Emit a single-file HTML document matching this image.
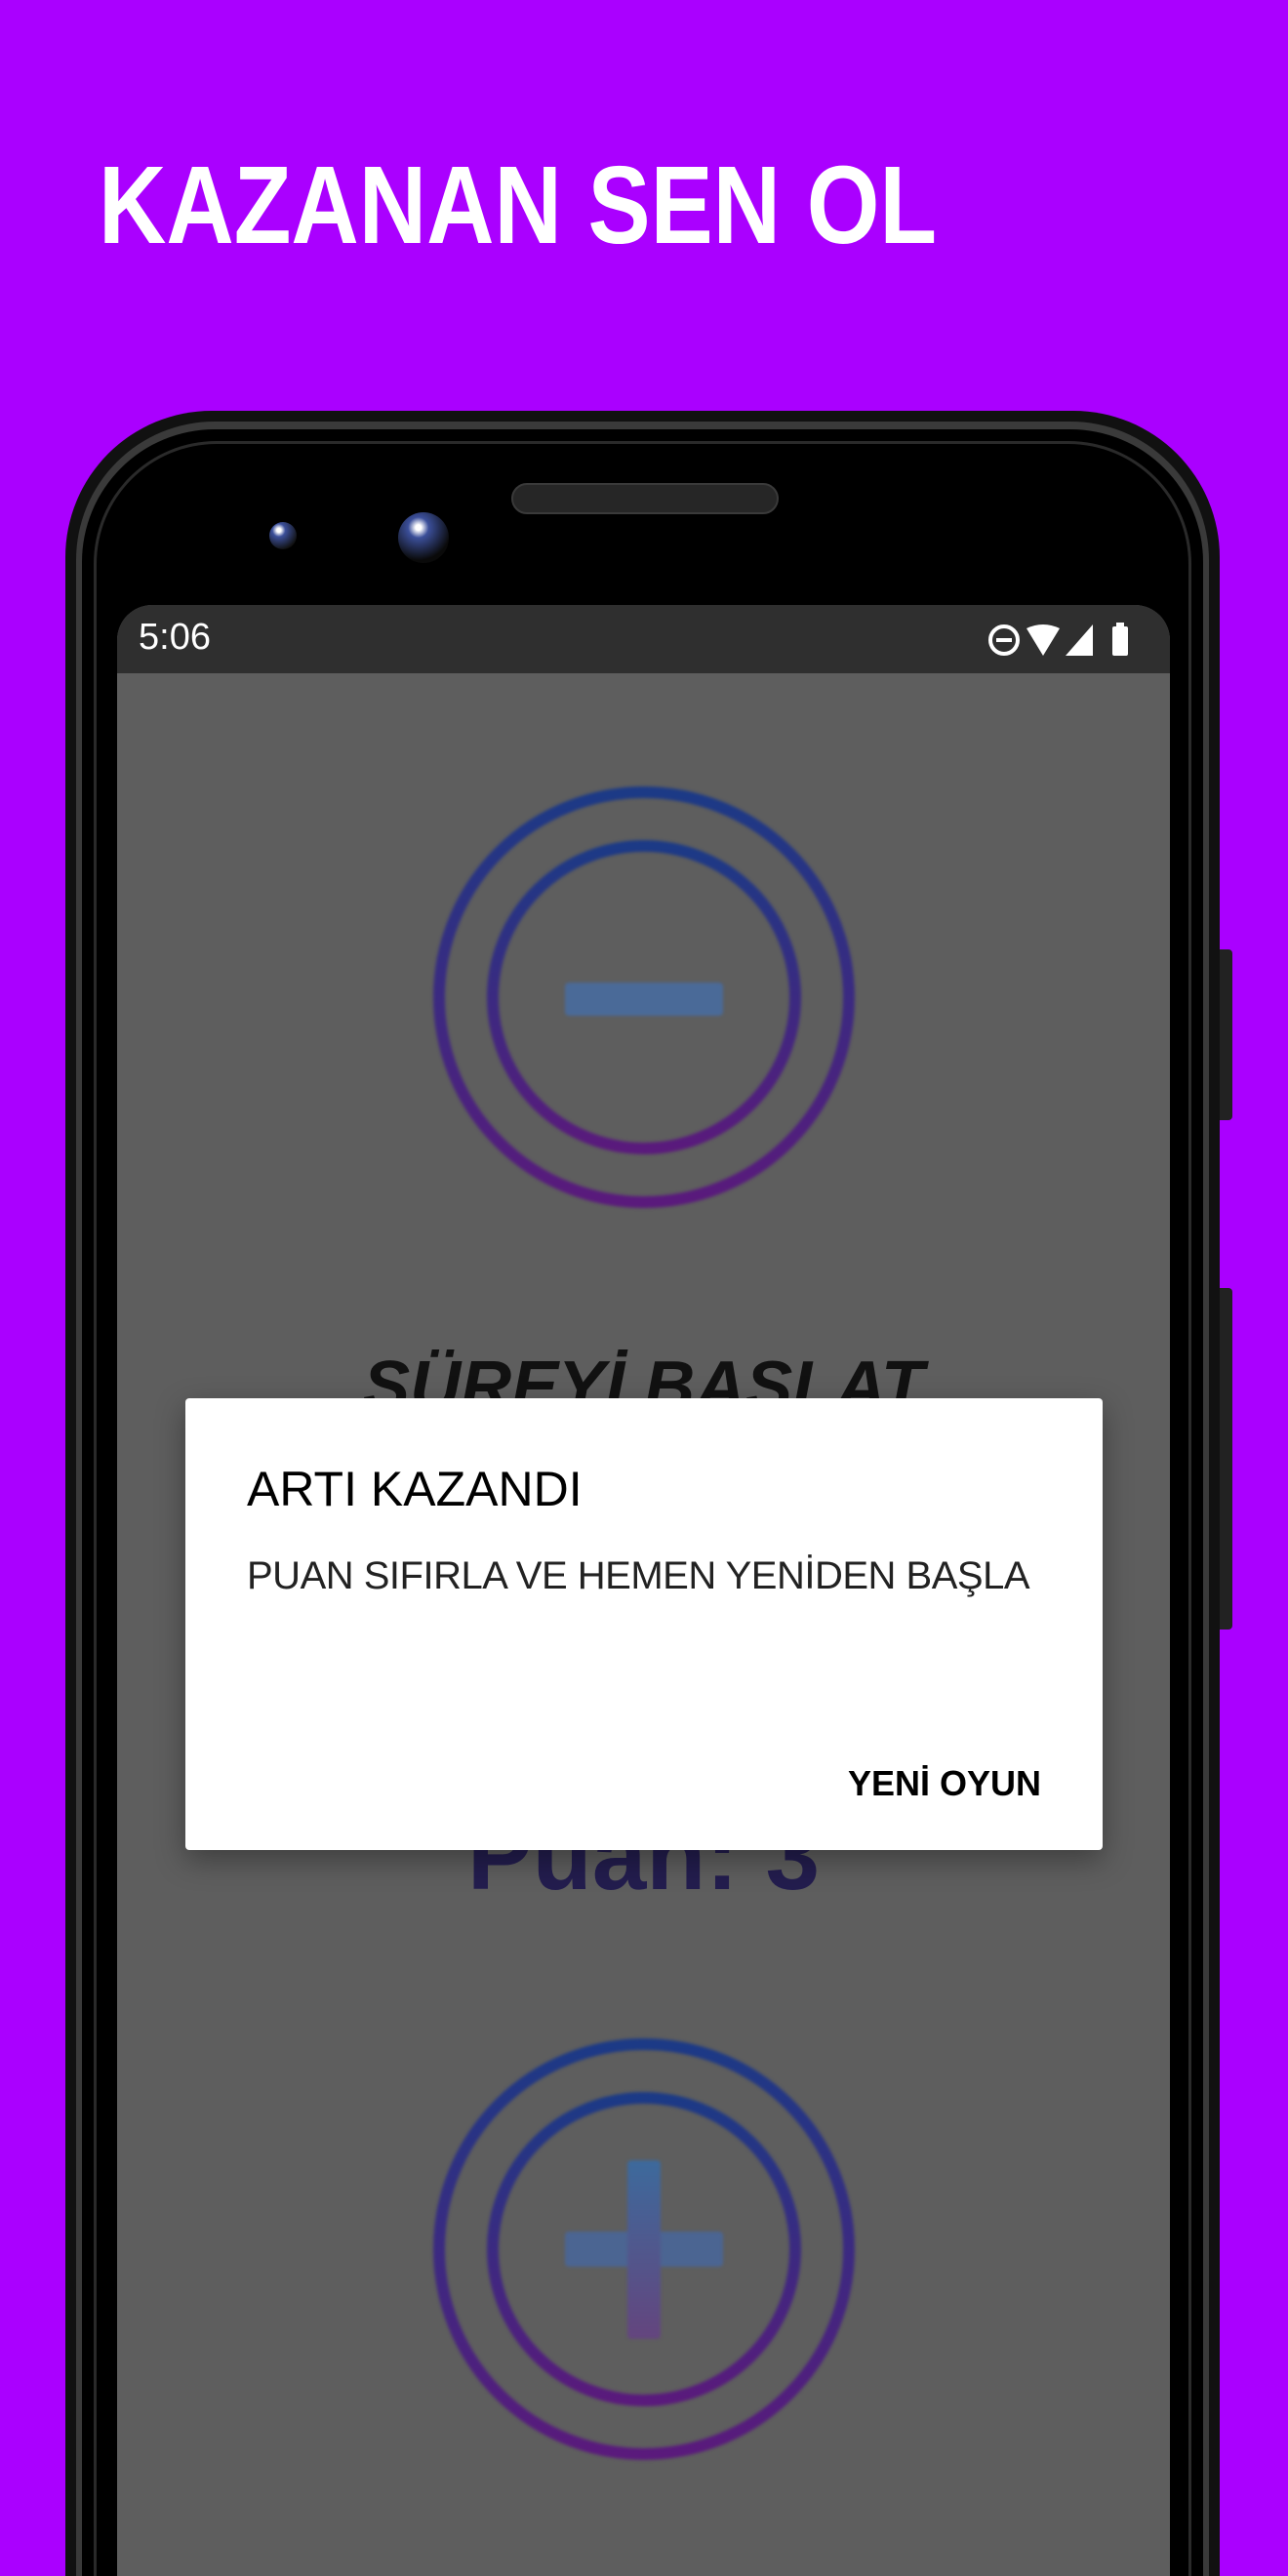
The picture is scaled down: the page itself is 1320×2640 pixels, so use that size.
<!DOCTYPE html>
<html style="margin:0;overflow:hidden;height:2640px"><head><meta charset="utf-8"><style>
body{margin:0;width:1320px;height:2640px;overflow:hidden;font-family:"Liberation Sans",sans-serif}
#w{position:relative;width:1320px;height:2640px;overflow:hidden;background:#aa00ff}
.abs{position:absolute}
</style></head><body><div id="w">
<div class="abs" style="left:101px;top:150px;font-size:113px;font-weight:bold;color:#fff;line-height:120px;transform:scaleX(0.85);transform-origin:0 0;white-space:nowrap">KAZANAN SEN OL</div>
<div class="abs" style="left:1246px;top:973px;width:17px;height:175px;background:#222;border-radius:4px"></div>
<div class="abs" style="left:1246px;top:1320px;width:17px;height:350px;background:#222;border-radius:4px"></div>
<div class="abs" style="left:67px;top:421px;width:1183px;height:2219px;background:#111;border-radius:150px 150px 0 0"></div>
<div class="abs" style="left:78px;top:432px;width:1161px;height:2208px;background:#3a3a3a;border-radius:142px 142px 0 0"></div>
<div class="abs" style="left:84px;top:440px;width:1149px;height:2200px;background:#000;border-radius:136px 136px 0 0"></div>
<div class="abs" style="left:96px;top:452px;width:1125px;height:2188px;border:3px solid #2a2a2a;border-bottom:0;border-radius:126px 126px 0 0;box-sizing:border-box"></div>
<div class="abs" style="left:524px;top:495px;width:274px;height:32px;background:#262626;border:2px solid #3a3a3a;border-radius:16px;box-sizing:border-box"></div>
<div class="abs" style="left:276px;top:535px;width:28px;height:28px;border-radius:50%;background:radial-gradient(circle at 35% 30%,#fff 0 8%,#3b4f9a 25%,#111 75%)"></div>
<div class="abs" style="left:408px;top:525px;width:52px;height:52px;border-radius:50%;background:radial-gradient(circle at 40% 30%,#fff 0 6%,#3b4f9a 22%,#0a0a0a 70%)"></div>
<div class="abs" style="left:120px;top:620px;width:1079px;height:2020px;background:#5e5e5e;border-radius:36px 36px 0 0;overflow:hidden">
  <div class="abs" style="left:0;top:0;width:1079px;height:70px;background:#2f2f2f;color:#fff;font-size:38px">
    <div class="abs" style="left:22px;top:12px">5:06</div>
    <svg class="abs" style="left:890px;top:14px" width="180" height="44" viewBox="0 0 180 44">
      <circle cx="19" cy="22" r="14" fill="none" stroke="#fff" stroke-width="4"/><rect x="11" y="20" width="16" height="4" fill="#fff"/>
      <path d="M42 10 Q59 2 76 10 L59 38 Z" fill="#fff"/>
      <path d="M110 6 L110 38 L82 38 Z" fill="#fff"/>
      <rect x="130" y="8" width="16" height="30" rx="2" fill="#fff"/><rect x="134" y="4" width="8" height="5" fill="#fff"/>
    </svg>
  </div>
  <svg class="abs" style="left:0;top:0;filter:blur(1.5px)" width="1079" height="2020">
    <defs><linearGradient id="g" x1="0" y1="0" x2="0" y2="1"><stop offset="0" stop-color="#1c3a86"/><stop offset="1" stop-color="#5a1a7c"/></linearGradient>
    <linearGradient id="b" x1="0" y1="0" x2="0" y2="1"><stop offset="0" stop-color="#3d6a9c"/><stop offset="1" stop-color="#64457e"/></linearGradient></defs>
    <g transform="translate(540,402)"><circle r="210" fill="none" stroke="url(#g)" stroke-width="12"/><circle r="155" fill="none" stroke="url(#g)" stroke-width="12"/>
      <rect x="-81" y="-15" width="162" height="34" rx="4" fill="#4a6a98"/></g>
    <g transform="translate(540,1685)"><circle r="210" fill="none" stroke="url(#g)" stroke-width="12"/><circle r="155" fill="none" stroke="url(#g)" stroke-width="12"/>
      <rect x="-81" y="-18" width="162" height="36" rx="4" fill="#4b6592"/><rect x="-17" y="-91" width="34" height="183" rx="4" fill="url(#b)"/></g>
  </svg>
  <div class="abs" style="left:0;width:1079px;top:760px;text-align:center;font-size:72px;font-weight:bold;font-style:italic;color:#111">SÜREYİ BAŞLAT</div>
  <div class="abs" style="left:0;width:1079px;top:1225px;text-align:center;font-size:100px;font-weight:bold;color:#231d4e">Puan: 3</div>
  <div class="abs" style="left:70px;top:813px;width:940px;height:463px;background:#fff;border-radius:4px;box-shadow:0 10px 30px rgba(0,0,0,.35)">
    <div class="abs" style="left:63px;top:64px;font-size:50px;color:#000">ARTI KAZANDI</div>
    <div class="abs" style="left:63px;top:160px;font-size:40px;color:#222;letter-spacing:-0.5px">PUAN SIFIRLA VE HEMEN YENİDEN BAŞLA</div>
    <div class="abs" style="right:63px;top:374px;font-size:36px;font-weight:bold;color:#000">YENİ OYUN</div>
  </div>
</div>
</div></body></html>
